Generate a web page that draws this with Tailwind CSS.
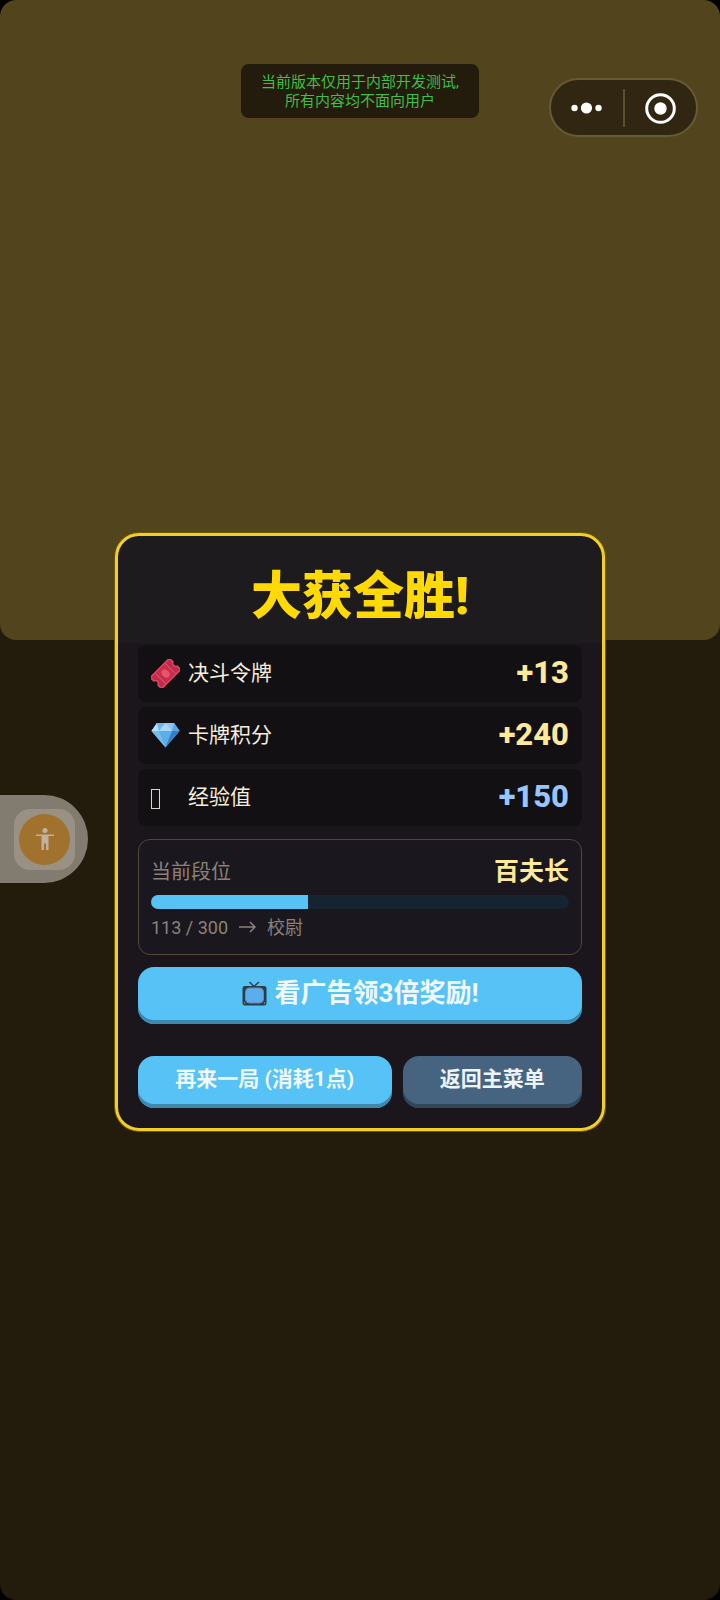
<!DOCTYPE html>
<html lang="zh-CN">
<head>
<meta charset="utf-8">
<meta name="viewport" content="width=device-width, initial-scale=1">
<title>大获全胜!</title>
<script src="https://cdn.jsdelivr.net/npm/@tailwindcss/browser@4"></script>
</head>
<body class="bg-black font-['Roboto','Noto_Sans_CJK_SC',sans-serif]">
<div class="relative flex min-h-screen flex-col overflow-hidden rounded-2xl bg-[#231b0b]">
  <div class="absolute inset-x-0 top-0 h-[40vh] rounded-2xl bg-[#52441d]"></div>

  <header class="relative h-[533px] shrink-0">
    <p class="mx-auto mt-16 w-[238px] rounded-lg bg-[#231b0b] pt-[9px] pb-[7px] text-center text-[15px] leading-[19px] text-[#3fbf46]">当前版本仅用于内部开发测试,<br>所有内容均不面向用户</p>
    <div class="absolute top-[78px] right-[22px] flex h-[59px] w-[149px] items-center rounded-full border-2 border-[#665a39] bg-[#302612]">
      <button type="button" aria-label="更多" class="flex flex-1 justify-center">
        <svg class="h-3 w-8" viewBox="0 0 32 12" fill="#fff"><circle cx="3.5" cy="6" r="3.2"/><circle cx="15.500" cy="6" r="5.600"/><circle cx="27.500" cy="6" r="3.200"/></svg>
      </button>
      <span class="h-[38px] w-0.5 bg-[#5b4f31]"></span>
      <button type="button" aria-label="关闭" class="flex flex-1 justify-center">
        <svg class="size-8" viewBox="0 0 32 32"><circle cx="16.500" cy="16.500" r="13.800" fill="none" stroke="#fff" stroke-width="3"/><circle cx="16.500" cy="16.500" r="6.200" fill="#fff"/></svg>
      </button>
    </div>
  </header>

  <main class="relative mx-auto w-[490px] max-w-full rounded-3xl border-3 border-[#f2cf27] bg-linear-to-b from-[#1d1b1e] from-18% to-[#1b161c] to-18% px-5 pt-[27px] pb-5 ring-1 ring-[#6d5808]">
    <h1 class="text-center text-[51px] leading-[68px] font-black text-[#ffd900]">大获全胜!</h1>
    <ul class="mt-[14px] flex flex-col gap-[5px] text-[21px] text-[#f6eddc]">
      <li class="flex h-[57px] items-center rounded-lg bg-[#121013] px-[13px]">
        <svg class="mr-2 size-[29px]" viewBox="0 0 29 29"><g transform="rotate(-45 14.5 14.5)"><path d="M1 6.500H28V11.500a3.200 3.200 0 0 0 0 6V22.500H1V17.500a3.200 3.200 0 0 0 0-6Z" fill="#c4284d" stroke="#dc4a64" stroke-width="1.500" stroke-linejoin="round"/><path d="M7.500 7.500V21.500M21.500 7.500V21.500" stroke="#e05a70" stroke-width="1"/><rect x="9.500" y="8" width="10" height="13" fill="#cf2c4c"/><ellipse cx="14.500" cy="14.500" rx="3.500" ry="4.500" fill="#e5566c"/></g></svg>
        <span>决斗令牌</span>
        <span class="ml-auto text-[31px] font-extrabold text-[#ffe898]">+13</span>
      </li>
      <li class="flex h-[57px] items-center rounded-lg bg-[#121013] px-[13px]">
        <svg class="mr-2 size-[29px]" viewBox="0 0 29 29"><path d="M6 2H23L28.500 10L14.500 26.500L.5 10Z" fill="#5dade9"/><path d="M6 2H23L28.500 10H.5Z" fill="#8bc7f2"/><path d="M6 2L.5 10H8Z" fill="#b8ddf6"/><path d="M6 2H14.500L8 10Z" fill="#6cb6ee"/><path d="M14.500 2L21 10H8Z" fill="#a9d6f5"/><path d="M23 2L28.500 10H21Z" fill="#5ba7e2"/><path d="M.5 10H8L14.500 26.500Z" fill="#75bbef"/><path d="M21 10H28.500L14.500 26.500Z" fill="#3181c6"/></svg>
        <span>卡牌积分</span>
        <span class="ml-auto text-[31px] font-extrabold text-[#ffe898]">+240</span>
      </li>
      <li class="flex h-[57px] items-center rounded-lg bg-[#121013] px-[13px]">
        <svg class="mr-2 size-[29px]" viewBox="0 0 29 29"><rect x=".5" y="6.500" width="8" height="19" fill="none" stroke="#ddd5c7" stroke-width="1"/></svg>
        <span>经验值</span>
        <span class="ml-auto text-[31px] font-extrabold text-[#98c5fb]">+150</span>
      </li>
    </ul>

    <section class="mt-[13px] h-[116px] rounded-xl border border-[#51473a] bg-[#1b171e] px-3 pt-4">
      <div class="flex h-8 items-center justify-between">
        <h2 class="text-[20px] text-[#8a8279]">当前段位</h2>
        <strong class="text-[25px] font-bold text-[#ffe898]">百夫长</strong>
      </div>
      <div role="progressbar" aria-label="段位进度" aria-valuemin="0" aria-valuemax="300" aria-valuenow="113" class="mt-[7px] h-[14px] overflow-hidden rounded-full bg-[#162331]">
        <div class="h-full bg-[#57c2f6]" style="width:37.67%"></div>
      </div>
      <p class="mt-1.5 flex h-6 items-center text-[18px] text-[#8a8279]">113 / 300
        <svg class="mx-[11px] h-3 w-[17px]" viewBox="0 0 17 12" fill="none" stroke="#8a8279" stroke-width="1.500"><path d="M0 6H16M11 1L16 6L11 11"/></svg>
        校尉</p>
    </section>

    <button type="button" class="mt-3 flex h-[57px] w-full items-center justify-center rounded-2xl bg-[#57c2f6] pb-1 text-[26px] font-bold text-[#f0f9ff] shadow-[inset_0_-4px_#3d88ac]">
      <svg class="mr-2 h-[25px] w-[25px]" viewBox="0 0 25 25"><path d="M7.500 1L12 5.500L17 1" fill="none" stroke="#2c4356" stroke-width="1.500"/><rect x=".5" y="5" width="24" height="19.500" rx="2.500" fill="#293d4e"/><rect x="3.500" y="7" width="18" height="15" rx="4" fill="#5badf0" stroke="#6b8ca3" stroke-width="1"/><circle cx="2.500" cy="22" r=".7" fill="#9ab"/><circle cx="22.500" cy="22" r=".7" fill="#9ab"/></svg>
      看广告领3倍奖励!
    </button>
    <div class="mt-8 flex gap-[11px]">
      <button type="button" class="h-[52px] flex-auto rounded-2xl bg-[#57c2f6] pb-1 text-[21px] font-bold text-[#f0f9ff] shadow-[inset_0_-4px_#3d88ac]">再来一局 (消耗1点)</button>
      <button type="button" class="h-[52px] flex-auto rounded-2xl bg-[#466480] pb-1 text-[21px] font-bold text-[#edf5fb] shadow-[inset_0_-4px_#31465a]">返回主菜单</button>
    </div>
  </main>

  <button type="button" aria-label="无障碍" class="absolute top-[795px] left-0 flex h-[88px] w-[88px] items-center rounded-r-full bg-[#827c70] pl-[14px]">
    <span class="flex size-[61px] items-center justify-center rounded-2xl bg-[#989184]">
      <span class="flex size-[51px] items-center justify-center rounded-full bg-[#a0722d]">
        <svg class="size-6" viewBox="0 0 24 24" fill="#bdb39f"><circle cx="12" cy="3.500" r="2.500"/><path d="M3 7.500H21V9H15.500V23H13V16.500H11V23H8.500V9H3Z"/></svg>
      </span>
    </span>
  </button>
</div>
</body>
</html>
